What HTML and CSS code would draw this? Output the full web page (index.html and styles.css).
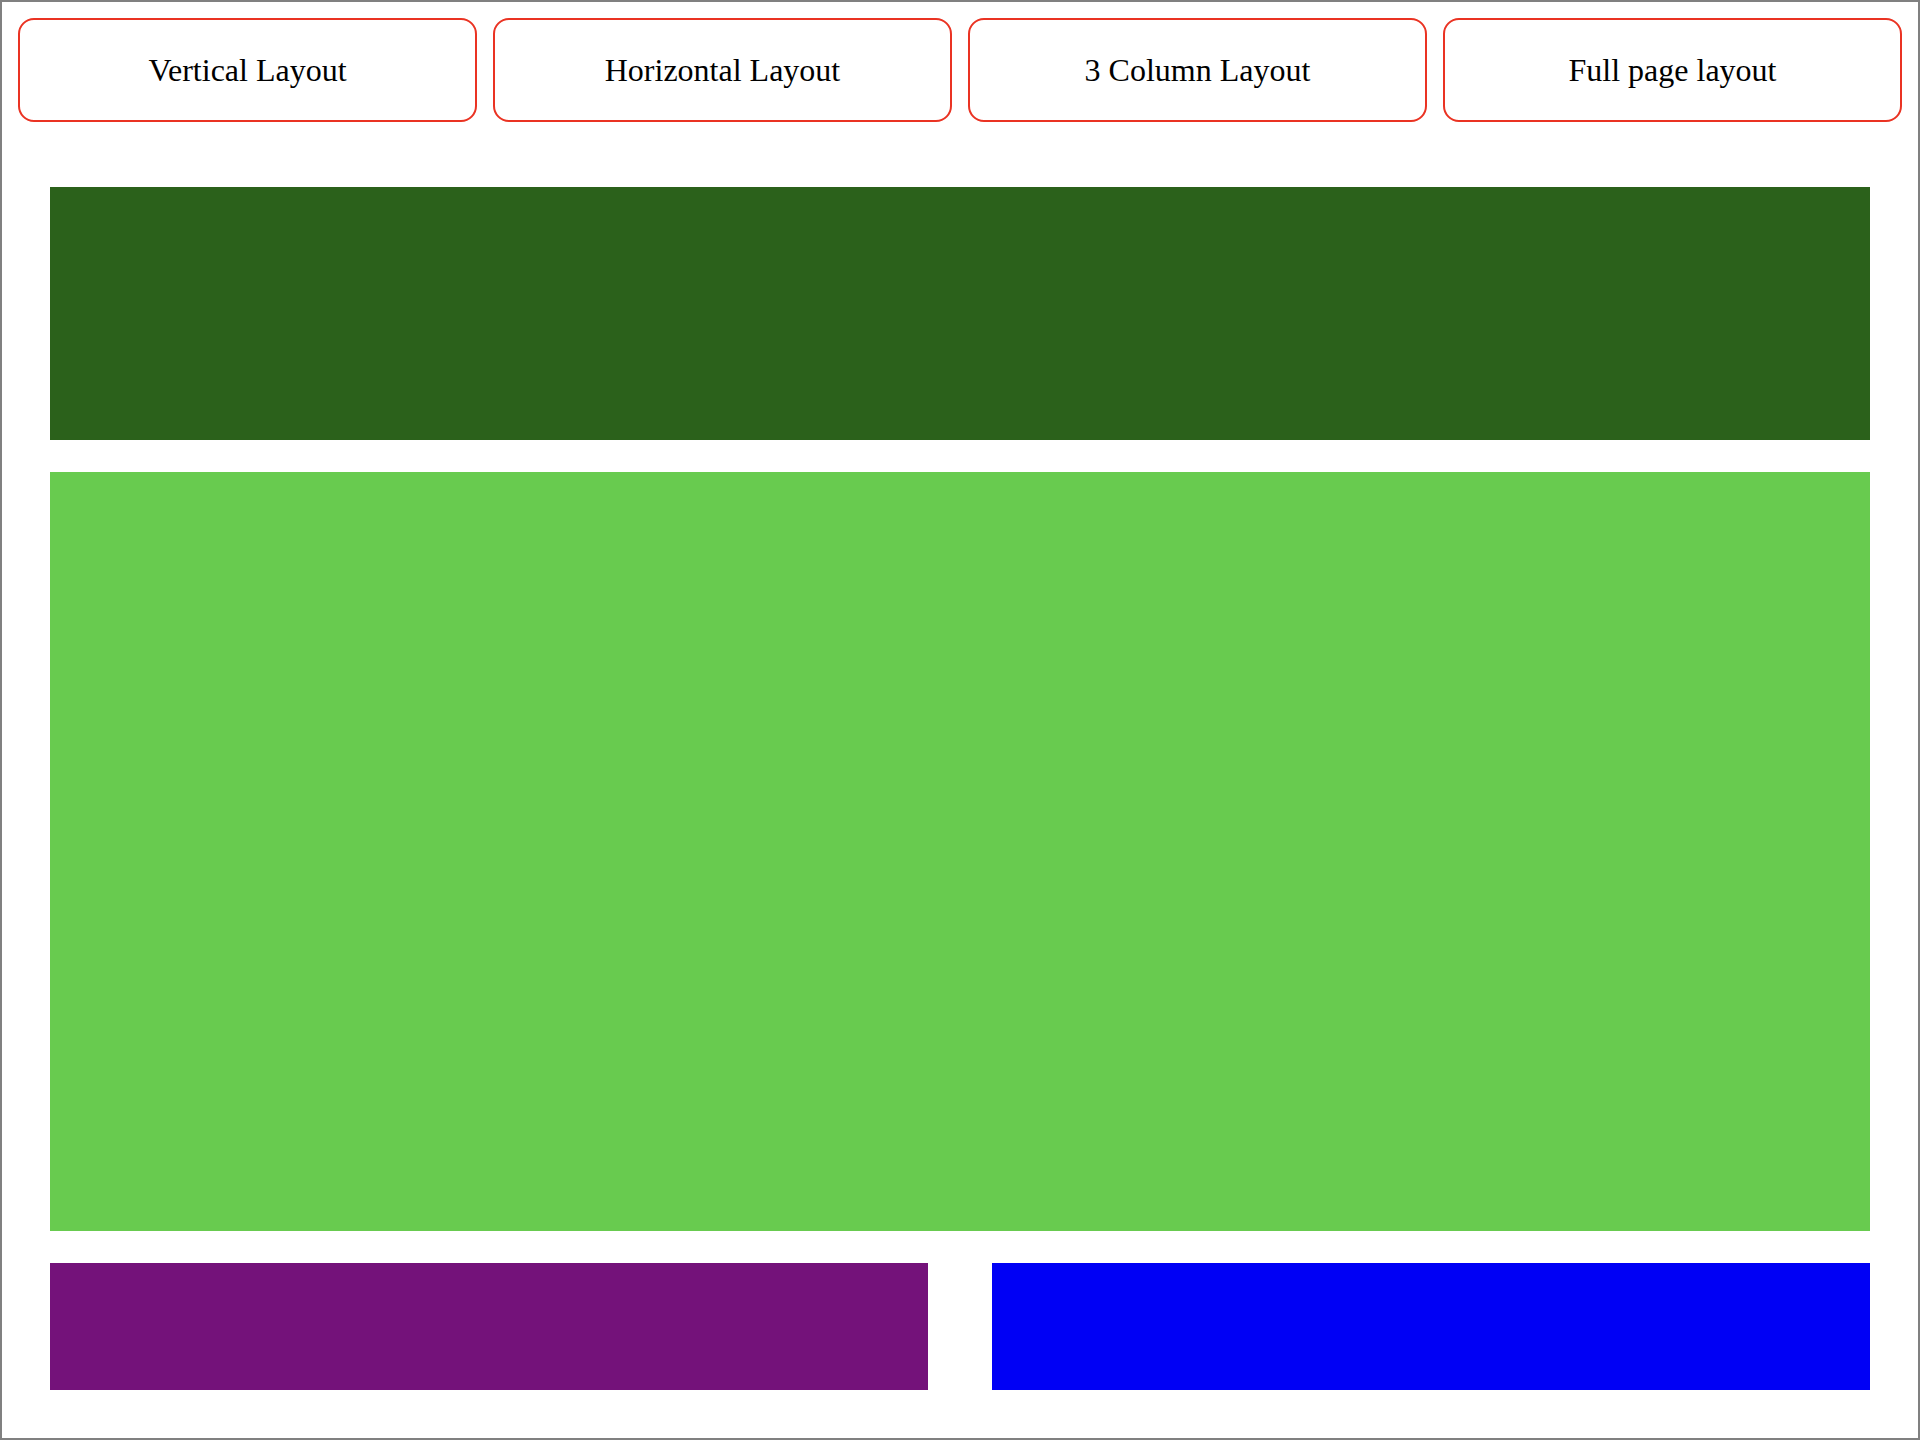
FILE: index.html
```html
<!DOCTYPE html>
<html lang="en">
<head>
<meta charset="utf-8">
<title>Layouts</title>
<link rel="stylesheet" href="styles.css">
</head>
<body>
<div class="frame">
  <nav class="tabs">
    <div class="tab">Vertical Layout</div>
    <div class="tab">Horizontal Layout</div>
    <div class="tab">3 Column Layout</div>
    <div class="tab">Full page layout</div>
  </nav>
  <main class="demo">
    <div class="block header"></div>
    <div class="block content"></div>
    <div class="block left"></div>
    <div class="block right"></div>
  </main>
</div>
</body>
</html>
```

FILE: styles.css
```css
* { box-sizing: border-box; }
html, body { margin: 0; padding: 0; background: #fff; }
body { font-family: "Liberation Serif", "Times New Roman", serif; color: #000; }
.frame {
  width: 1920px;
  height: 1440px;
  border: 2px solid #808080;
  padding: 16px;
}
.tabs {
  display: flex;
  gap: 16px;
}
.tab {
  flex: 1 1 0;
  height: 104px;
  border: 2px solid #ea3323;
  border-radius: 16px;
  display: flex;
  align-items: center;
  justify-content: center;
  font-size: 32px;
}
.demo {
  margin-top: 33px;
  padding: 32px;
  display: grid;
  grid-template-columns: 1fr 1fr;
  grid-template-rows: 253px 759px 127px;
  column-gap: 64px;
  row-gap: 32px;
}
.header { grid-column: 1 / 3; background: #2b611b; }
.content { grid-column: 1 / 3; background: #68cb4f; }
.left { background: #74127a; }
.right { background: #0000f5; }
```
